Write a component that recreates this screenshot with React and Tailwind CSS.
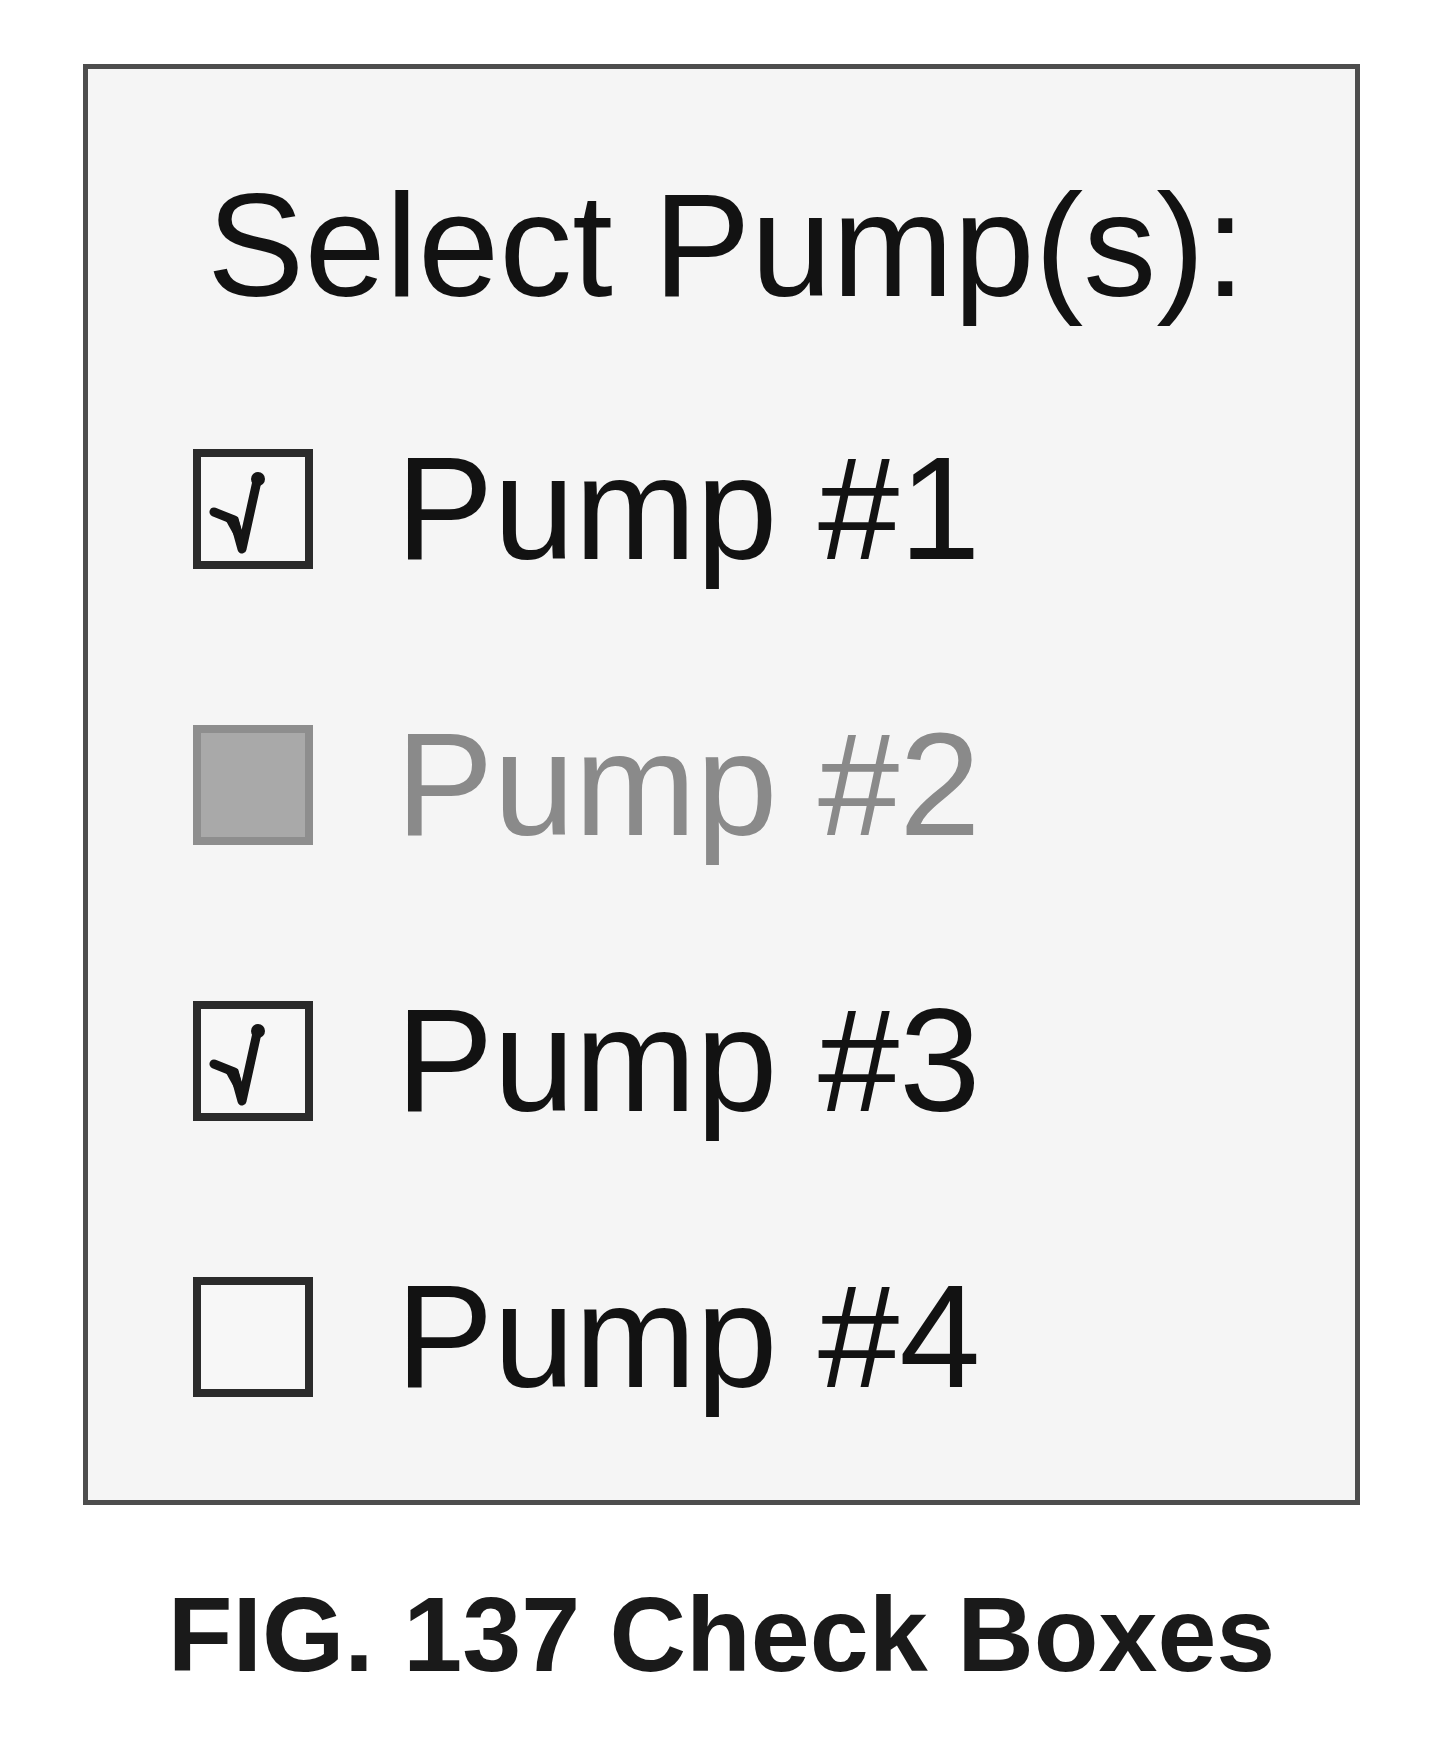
const pumps = [
  { label: 'Pump #1', state: 'checked' },
  { label: 'Pump #2', state: 'disabled' },
  { label: 'Pump #3', state: 'checked' },
  { label: 'Pump #4', state: 'empty' },
];

const CheckMark = () => (
  <svg className="absolute inset-0 w-full h-full" viewBox="0 0 104 104" fill="none">
    <path
      d="M13 55 L33 63 L41 92 L56 24"
      stroke="#151515"
      strokeWidth={9}
      strokeLinecap="round"
      strokeLinejoin="round"
    />
    <path d="M20 55 L37 60 L44 84 L34 80 Z" fill="#151515" />
    <circle cx={57} cy={22} r={7} fill="#151515" />
  </svg>
);

const Box = ({ state }) => {
  if (state === 'disabled') {
    return <div className="w-[120px] h-[120px] shrink-0 border-8 border-[#8e8e8e] bg-[#a9a9a9]" />;
  }
  return (
    <div className="relative w-[120px] h-[120px] shrink-0 border-8 border-[#2b2b2b] bg-[#f7f7f7]">
      {state === 'checked' && <CheckMark />}
    </div>
  );
};

export default function App() {
  return (
    <div className="min-h-[1764px] bg-white pl-[83px] pt-[64px] font-['Liberation_Sans',Arial,sans-serif]">
      <div className="w-[1277px]">
        <div className="border-[5px] border-[#4d4d4d] bg-[#f5f5f5] pt-[104px] pb-[90px]">
          <h1 className="ml-[119px] text-[146px] leading-none font-normal text-[#121212]">
            Select Pump(s):
          </h1>
          <div className="mt-[117px] pl-[105px] flex flex-col gap-[130px]">
            {pumps.map((p) => (
              <label key={p.label} className="flex items-center gap-[83px]">
                <Box state={p.state} />
                <span
                  className={
                    p.state === 'disabled'
                      ? 'text-[146px] leading-none text-[#8a8a8a]'
                      : 'text-[146px] leading-none text-[#121212]'
                  }
                >
                  {p.label}
                </span>
              </label>
            ))}
          </div>
        </div>
        <p className="mt-[76px] text-center text-[106px] leading-none font-bold text-[#1a1a1a]">
          FIG. 137 Check Boxes
        </p>
      </div>
    </div>
  );
}
